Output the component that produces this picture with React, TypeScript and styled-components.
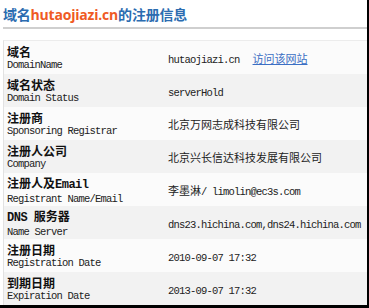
import { createGlobalStyle } from 'styled-components';
import styled from 'styled-components';

const GlobalStyle = createGlobalStyle`
  html, body {
    margin: 0;
    padding: 0;
    background: #000;
  }
`;

const StyledFrame = styled.div`
  width: 367px;
  height: 305px;
  background: #fff;
  overflow: hidden;
  font-family: "Noto Sans CJK SC", sans-serif;
`;

const Title = styled.h2`
  margin: 0;
  padding: 6px 0 0 3px;
  height: 22px;
  box-sizing: border-box;
  font-family: "Open Sans", "Noto Sans CJK SC", sans-serif;
  font-size: 14px;
  line-height: 18px;
  font-weight: 700;
  color: #2b6cb0;
  letter-spacing: -0.2px;

  .domain {
    color: #ef5a24;
  }
`;

const Divider = styled.div`
  margin: 5px 0 0 3px;
  height: 2px;
  background: #cfcfcf;
`;

const InfoTable = styled.div`
  margin: 11px 0 0 3px;
  border-left: 1px solid #e2e2e2;
  border-top: 1px solid #ececec;
`;

const Row = styled.div<{ $shaded: boolean }>`
  display: grid;
  grid-template-columns: 164px 1fr;
  align-items: center;
  height: 33px;
  background: ${p => (p.$shaded ? '#f2f2f2' : '#fbfbfb')};
`;

const Label = styled.div`
  padding-left: 3px;
  display: flex;
  flex-direction: column;
  gap: 2px;

  .cn {
    font-size: 12px;
    line-height: 13px;
    font-weight: 700;
    color: #111;
    white-space: pre;
  }

  .en {
    font-family: "Liberation Mono", monospace;
    font-size: 10.5px;
    letter-spacing: -0.8px;
    line-height: 10px;
    color: #222;
    white-space: pre;
  }

  .mono-bold {
    font-family: "Liberation Mono", monospace;
    letter-spacing: -0.5px;
  }
`;

const Value = styled.div`
  font-size: 11px;
  color: #222;
  white-space: nowrap;

  .mono {
    font-family: "Liberation Mono", monospace;
    font-size: 10.5px;
    letter-spacing: -0.8px;
    white-space: pre;
  }
`;

const VisitLink = styled.a`
  margin-left: 13px;
  font-size: 11px;
  color: #3c6fc4;
  text-decoration: underline;
`;

const rows = [
  {
    cn: <>域名</>,
    en: 'DomainName',
    value: (
      <>
        <span className="mono">hutaojiazi.cn</span>
        <VisitLink href="#">访问该网站</VisitLink>
      </>
    )
  },
  { cn: <>域名状态</>, en: 'Domain Status', value: <span className="mono">serverHold</span> },
  { cn: <>注册商</>, en: 'Sponsoring Registrar', value: <>北京万网志成科技有限公司</> },
  { cn: <>注册人公司</>, en: 'Company', value: <>北京兴长信达科技发展有限公司</> },
  {
    cn: <>注册人及<span className="mono-bold">Email</span></>,
    en: 'Registrant Name/Email',
    value: <>李墨淋<span className="mono">/ limolin@ec3s.com</span></>
  },
  {
    cn: <><span className="mono-bold">DNS </span>服务器</>,
    en: 'Name Server',
    value: <span className="mono">dns23.hichina.com,dns24.hichina.com</span>
  },
  { cn: <>注册日期</>, en: 'Registration Date', value: <span className="mono">2010-09-07 17:32</span> },
  { cn: <>到期日期</>, en: 'Expiration Date', value: <span className="mono">2013-09-07 17:32</span> }
];

function App () {
  return (
    <StyledFrame>
      <GlobalStyle />
      <Title>
        域名<span className="domain">hutaojiazi.cn</span>的注册信息
      </Title>
      <Divider />
      <InfoTable>
        {rows.map((row, i) => (
          <Row key={i} $shaded={i % 2 === 1}>
            <Label>
              <span className="cn">{row.cn}</span>
              <span className="en">{row.en}</span>
            </Label>
            <Value>{row.value}</Value>
          </Row>
        ))}
      </InfoTable>
    </StyledFrame>
  );
}

export default App;
